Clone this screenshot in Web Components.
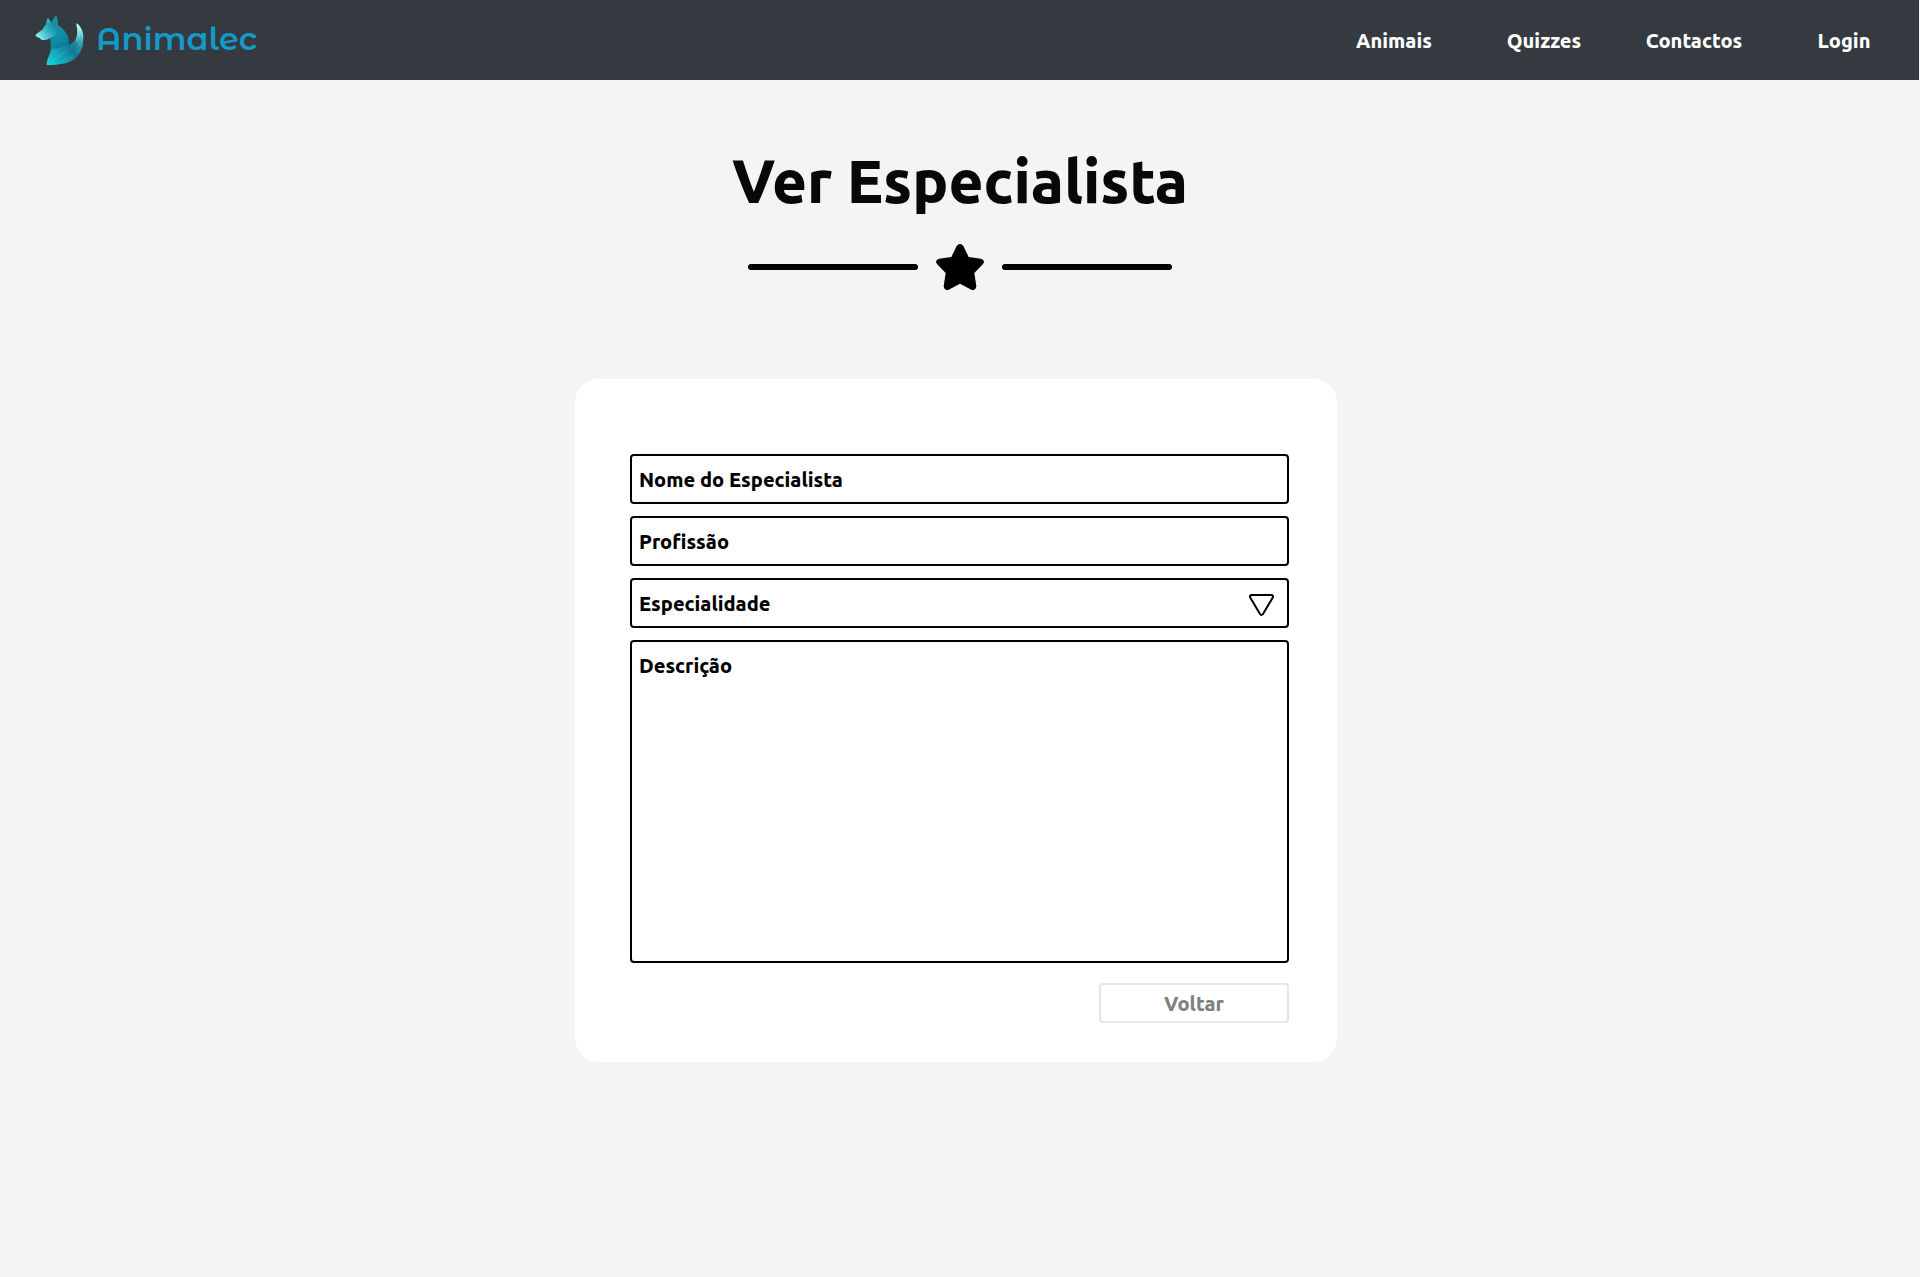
<!DOCTYPE html>
<html lang="pt">
<head>
<meta charset="utf-8">
<meta name="viewport" content="width=device-width, initial-scale=1">
<title>Ver Especialista</title>
<style>
  body { margin: 0; min-height: 100vh; background: #f3f4f6; color: #000; font: 800 20px/24px Ubuntu, "Noto Sans", sans-serif; }
</style>
</head>
<body>
<app-header>
  <nav-link href="#animais">Animais</nav-link>
  <nav-link href="#quizzes">Quizzes</nav-link>
  <nav-link href="#contactos">Contactos</nav-link>
  <nav-link href="#login">Login</nav-link>
</app-header>
<page-title>Ver Especialista</page-title>
<form-card>
  <text-field label="Nome do Especialista"></text-field>
  <text-field label="Profissão"></text-field>
  <select-field label="Especialidade"></select-field>
  <text-field label="Descrição" multiline></text-field>
  <outline-button slot="actions">Voltar</outline-button>
</form-card>

<script>
const define = (name, render) => customElements.define(name, class extends HTMLElement {
  connectedCallback() {
    if (!this.shadowRoot) this.attachShadow({ mode: 'open' }).innerHTML = render(this);
  }
});

const fieldBase = `
  :host { display: block; }
  * { box-sizing: border-box; }
  input, textarea, select {
    display: block; width: 100%; height: 50px; margin: 0; padding: 0 7px;
    border: 2px solid #000; border-radius: 4px; background: #fff;
    color: #000; font: inherit;
  }
  ::placeholder { color: #000; opacity: 1; }
`;

define('fox-logo', () => `
  <style>
    :host { display: block; }
    svg { display: block; width: 50px; height: 50px; }
  </style>
  <svg viewBox="17 15 150 150" aria-hidden="true">
    <defs>
      <linearGradient id="head" gradientUnits="userSpaceOnUse" x1="22" y1="85" x2="78" y2="45">
        <stop offset="0" stop-color="#a5f7f3"/><stop offset=".35" stop-color="#57cbd5"/><stop offset=".75" stop-color="#20a0b5"/><stop offset="1" stop-color="#168ca2"/>
      </linearGradient>
      <linearGradient id="body" gradientUnits="userSpaceOnUse" x1="70" y1="60" x2="110" y2="120">
        <stop offset="0" stop-color="#1494aa"/><stop offset=".5" stop-color="#0b8ba2"/><stop offset="1" stop-color="#116f8b"/>
      </linearGradient>
      <linearGradient id="tail" gradientUnits="userSpaceOnUse" x1="55" y1="165" x2="145" y2="95">
        <stop offset="0" stop-color="#16d4df"/><stop offset=".4" stop-color="#16a6bb"/><stop offset=".75" stop-color="#167796"/><stop offset="1" stop-color="#2a91a8"/>
      </linearGradient>
      <linearGradient id="tip" gradientUnits="userSpaceOnUse" x1="145" y1="42" x2="150" y2="130">
        <stop offset="0" stop-color="#cbfffa"/><stop offset=".4" stop-color="#6fd3d9"/><stop offset="1" stop-color="#1c7795" stop-opacity="0"/>
      </linearGradient>
    </defs>
    <path fill="#35b4c3" d="M51 48Q50 33 55 23Q61 28 66 39L60 49Z"/>
    <path fill="url(#body)" d="M62 50L87 46Q103 56 112 72Q120 86 119 106L100 132L58 142Q65 124 64 108Q67 100 60 82Z"/>
    <path fill="url(#head)" d="M18 75Q27 66 39 59Q43 48 52 41Q58 38 66 38Q71 27 81 16Q87 31 86 46Q91 57 86 69Q78 80 62 83Q56 90 45 90Q35 92 31 84Q23 84 18 75Z"/>
    <path fill="#178ca3" d="M66 39Q71 27 81 16Q87 31 86 48Q77 42 66 39Z"/>
    <path fill="url(#tail)" d="M51 165Q53 145 62 131Q67 121 70 113L74 120L80 112L83 118Q99 107 116 106Q133 99 139 88Q148 75 141 40Q151 45 158 61Q163 74 162 89L160 98L162 102Q159 114 153 123L154 127Q139 149 120 156Q92 166 51 165Z"/>
    <path fill="url(#tip)" d="M141 40Q151 45 158 61Q164 77 160 98L162 102Q158 116 150 127Q151 112 145 98L138 91Q148 75 141 40Z"/>
    <path fill="none" stroke="#0f718c" stroke-width="2" opacity=".3" d="M61 151Q81 127 116 111M83 153Q113 141 138 112M145 101Q154 89 155 71"/>
    <path fill="none" stroke="#47c0ce" stroke-width="2" opacity=".25" d="M70 149Q102 128 129 108M98 156Q132 144 151 117"/>
  </svg>`);

define('app-header', () => `
  <style>
    :host { display: block; margin-right: 1px; background: #343a40; color: #fff; }
    header { display: flex; align-items: center; justify-content: space-between; height: 80px; }
    .brand { display: flex; align-items: center; gap: 11px; padding-left: 35px; color: #1499c9; text-decoration: none; font: 600 32px/40px "Montserrat Alternates", Ubuntu, sans-serif; }
    .name { padding-bottom: 2px; }
    nav { display: flex; padding-top: 2px; }
  </style>
  <header>
    <a class="brand" href="#inicio"><fox-logo></fox-logo><span class="name">Animalec</span></a>
    <nav><slot></slot></nav>
  </header>`);

define('nav-link', el => `
  <style>
    :host { display: block; width: 150px; text-align: center; }
    a { color: inherit; text-decoration: none; }
  </style>
  <a href="${el.getAttribute('href')}"><slot></slot></a>`);

define('page-title', () => `
  <style>
    :host { display: flex; flex-direction: column; align-items: center; gap: 30px; padding-top: 68px; }
    h1 { margin: 0; color: #080808; font: 800 60px/66px Ubuntu, "Noto Sans", sans-serif; }
    .rule { display: flex; align-items: center; gap: 18px; }
    .line { width: 170px; height: 6px; border-radius: 3px; background: #000; }
    svg { display: block; width: 48px; height: 46px; }
  </style>
  <h1><slot></slot></h1>
  <div class="rule">
    <span class="line"></span>
    <svg viewBox="48 42 144 138" aria-hidden="true"><path d="M110 48Q120 36 130 48L146 81L183 86Q197 91 189 102L163 129L169 168Q167 183 154 179L120 161L86 179Q73 183 71 168L77 129L51 102Q43 91 57 86L94 81Z"/></svg>
    <span class="line"></span>
  </div>`);

define('form-card', () => `
  <style>
    :host { display: flex; justify-content: center; padding: 89px 8px 80px 0; }
    form { box-sizing: border-box; width: 100%; max-width: 762px; padding: 75px 48px 39px 55px; border-radius: 24px; background: #fff; }
    .fields { display: flex; flex-direction: column; gap: 12px; }
    .actions { display: flex; justify-content: flex-end; padding-top: 20px; }
  </style>
  <form>
    <div class="fields"><slot></slot></div>
    <div class="actions"><slot name="actions"></slot></div>
  </form>`);

define('text-field', el => {
  const label = el.getAttribute('label');
  const attrs = `aria-label="${label}" placeholder="${label}"`;
  return `
  <style>
    ${fieldBase}
    textarea { height: 323px; padding-top: 12px; resize: none; }
  </style>
  ${el.hasAttribute('multiline') ? `<textarea ${attrs}></textarea>` : `<input type="text" ${attrs}>`}`;
});

define('select-field', el => `
  <style>
    ${fieldBase}
    .box { display: grid; align-items: center; }
    .box > * { grid-area: 1 / 1; }
    select { appearance: none; padding-top: 2px; }
    svg { justify-self: end; width: 25px; height: 22px; margin-right: 15px; margin-top: 4px; pointer-events: none; }
  </style>
  <div class="box">
    <select aria-label="${el.getAttribute('label')}"><option>${el.getAttribute('label')}</option></select>
    <svg viewBox="0 0 25 22" fill="none" stroke="#000" stroke-width="2" aria-hidden="true"><path d="M3 1H22Q25 1 23.500 4L14 20Q12.500 22 11 20L1.500 4Q0 1 3 1Z"/></svg>
  </div>`);

define('outline-button', () => `
  <style>
    :host { display: block; width: 190px; }
    button { display: block; box-sizing: border-box; width: 100%; height: 40px; margin: 0; padding: 2px 0 0; border: 2px solid #e5e5e5; border-radius: 4px; background: #fff; color: #808080; font: inherit; }
  </style>
  <button type="button"><slot></slot></button>`);
</script>
</body>
</html>
